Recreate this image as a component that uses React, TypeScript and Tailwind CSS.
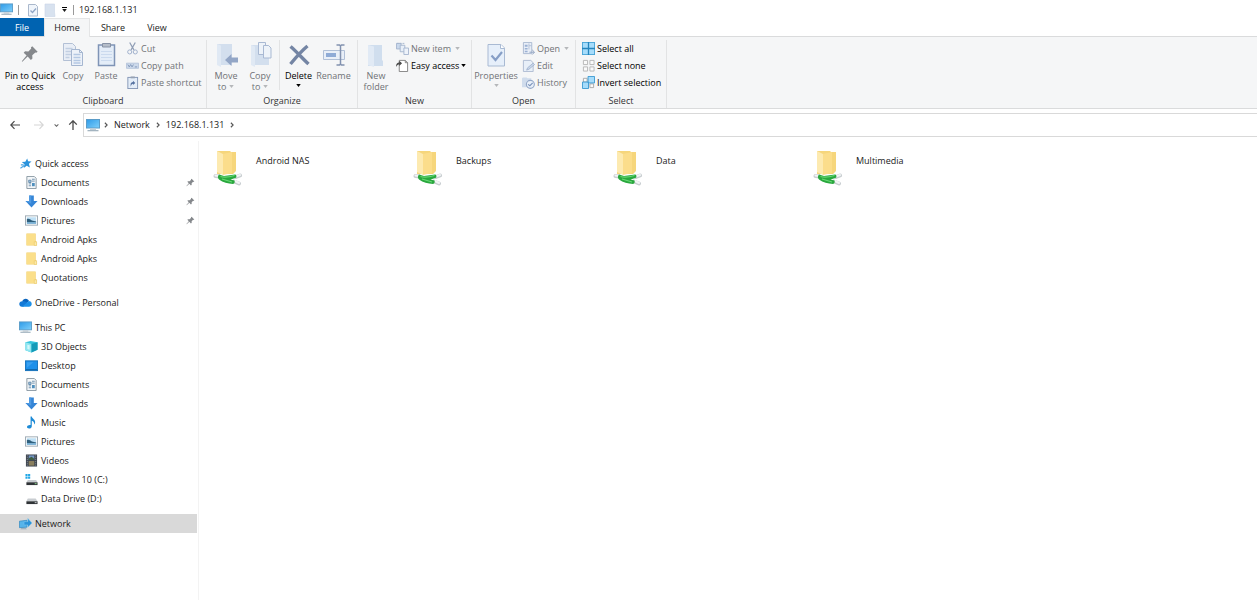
import type { ReactNode } from 'react';
import clsx from 'clsx';

type IconProps = { className?: string };

/* ---------- shared icons ---------- */

const MonitorIcon = ({ className }: IconProps) => (
  <svg viewBox="0 0 14 13" className={className} aria-hidden="true">
    <defs>
      <linearGradient id="screen" x1="0" y1="0" x2="1" y2="1">
        <stop offset="0" stopColor="#2f9be8" />
        <stop offset="1" stopColor="#7fd0fb" />
      </linearGradient>
    </defs>
    <rect x="0.5" y="0.5" width="13" height="8.5" fill="url(#screen)" stroke="#5b9cc8" />
    <path d="M4 9.500h6v1.500H4z" fill="#c4cdd4" />
    <path d="M1.500 11h11v1.300h-11z" fill="#a3b4c0" />
  </svg>
);

const PinIcon = ({ className }: IconProps) => (
  <svg viewBox="0 0 20 20" className={className} fill="currentColor" aria-hidden="true">
    <path d="M12.5 1.5l6 6-1.6 1.2-1-.4-3.4 3.2.2 3.6-1.7 1.5-3.6-3.7L1.5 18.500l-.6-.5 5.300-6.200L3 8.600l1.500-1.600 3.700.3 3.200-3.400-.4-1.200z" />
  </svg>
);

const StarIcon = ({ className }: IconProps) => (
  <svg viewBox="0 0 14 14" className={className} aria-hidden="true">
    <path d="M8.800 1.500l1 3.200 3.700.2-2.800 2.500 1 3.900-3.400-1.900-3.200 2.500.8-4L3 5.400l3.800-.4z" fill="#2a93dc" />
    <path d="M1.500 12l4-2.500M2 8.500h3" stroke="#4ba5e3" strokeWidth="1.300" />
  </svg>
);

const DocumentIcon = ({ className }: IconProps) => (
  <svg viewBox="0 0 14 14" className={className} aria-hidden="true">
    <path d="M2 .5h8l2 2v11H2z" fill="#f4f7f9" stroke="#8796a1" />
    <path d="M4 4.500h2.500v2.500H4zM7.500 3.500h3M7.500 5.500h3M4 8.500h2.500M4 10.500h2.500" stroke="#5d83a3" fill="#9fc3de" strokeWidth="0.900" />
    <path d="M7.500 7.500h3v3.500h-3z" fill="#4f8fbd" />
  </svg>
);

const DownloadIcon = ({ className }: IconProps) => (
  <svg viewBox="0 0 14 14" className={className} aria-hidden="true">
    <path d="M4.500.5h5v6h4L7 13.500.5 6.500h4z" fill="#3585d6" />
    <path d="M4.500.5h2.200v9L2 7 .5 6.500h4z" fill="#4f9ae2" />
  </svg>
);

const PictureIcon = ({ className }: IconProps) => (
  <svg viewBox="0 0 14 14" className={className} aria-hidden="true">
    <rect x="0.500" y="2" width="13" height="10" fill="#fff" stroke="#9aa7b1" />
    <path d="M2 3.500h10v7H2z" fill="#bfe0f5" />
    <path d="M2 5.500c2-1 4 .5 5.500 1.500l4.500 1v1H2z" fill="#2f5f7c" />
    <path d="M2 9h10v1.500H2z" fill="#6aa6cf" />
  </svg>
);

const FolderIcon = ({ className }: IconProps) => (
  <svg viewBox="0 0 14 14" className={className} aria-hidden="true">
    <path d="M1.500.5h10v8l1 1v4h-11z" fill="#f2d06c" />
    <path d="M2 1h9v12H2z" fill="#fbdf8a" />
    <path d="M10 9.500h2.500v4H10z" fill="#fbe9ab" stroke="#e6c258" strokeWidth="0.500" />
  </svg>
);

const CloudIcon = ({ className }: IconProps) => (
  <svg viewBox="0 0 14 14" className={className} aria-hidden="true">
    <path d="M3.500 6C4 3.800 5.500 3 7.200 3c1.800 0 3 1 3.500 2.500L8 8z" fill="#0a64bd" />
    <path d="M3.600 5.600C1.500 5.600.3 7 .3 8.600c0 1.700 1.200 2.900 2.800 2.900h1.500l5-4C7.500 6 5.800 5.400 3.600 5.600z" fill="#1379d6" />
    <path d="M10.500 5.500c1.900 0 3.200 1.300 3.200 3s-1.200 3-3 3H3.100L8.200 7.600z" fill="#1d90e8" />
  </svg>
);

const CubeIcon = ({ className }: IconProps) => (
  <svg viewBox="0 0 14 14" className={className} aria-hidden="true">
    <path d="M.5 2.500L6 1l7.500 1.500v8L7 13.500.5 11z" fill="#35c3dc" />
    <path d="M.5 2.500L7 4.200v9.300L.5 11z" fill="#8fe6f0" />
    <path d="M7 4.200l6.500-1.700v8L7 13.500z" fill="#159ab8" />
    <path d="M2.500 5l2.500.6v4.900L2.500 9.800z" fill="#d3f7fb" />
  </svg>
);

const DesktopIcon = ({ className }: IconProps) => (
  <svg viewBox="0 0 14 14" className={className} aria-hidden="true">
    <rect x="0.500" y="2" width="13" height="10.500" fill="#1e90ea" stroke="#1673bd" />
    <path d="M1 11h12v1H1z" fill="#0f5f9f" />
    <path d="M2 3.500h7l-7 6z" fill="#3aa0f0" />
  </svg>
);

const MusicIcon = ({ className }: IconProps) => (
  <svg viewBox="0 0 14 14" className={className} aria-hidden="true">
    <path d="M6 .5h1.300c.3 2.500 3.900 3 3.600 6.500-.1 1-.6 1.700-1.200 2.200.6-2.400-.7-3.700-2.400-4.200V11c0 1.400-1.300 2.500-2.900 2.500S2 12.800 2.200 11.700c.2-1.300 1.900-2.200 3.800-1.900z" fill="#1c8ad6" />
  </svg>
);

const VideoIcon = ({ className }: IconProps) => (
  <svg viewBox="0 0 14 14" className={className} aria-hidden="true">
    <path d="M1 .5h12v13H1z" fill="#3f4650" />
    <path d="M4 1.500h6v5H4z" fill="#7396c4" />
    <path d="M4 7.500h6v5H4z" fill="#8a7f5e" />
    <path d="M4 4.500l3-1.500 3 2v1.500H4z" fill="#3e5d44" />
    <path d="M2.500 1.500v11.500M11.500 1.500v11.500" stroke="#8d949e" strokeWidth="1" strokeDasharray="1 1" />
  </svg>
);

const WinDriveIcon = ({ className }: IconProps) => (
  <svg viewBox="0 0 14 14" className={className} aria-hidden="true">
    <path d="M.5 1h2.300v2.300H.5zM3.300 1h2.300v2.300H3.300zM.5 3.800h2.300v2.300H.5zM3.300 3.800h2.300v2.300H3.300z" fill="#22a7e6" />
    <path d="M3 7.500h9l1.500 2.500h-12z" fill="#c5cace" />
    <path d="M1.500 10h12v3h-12z" fill="#2f3336" />
    <path d="M10.500 11h2v1h-2z" fill="#8fe08f" />
  </svg>
);

const DriveIcon = ({ className }: IconProps) => (
  <svg viewBox="0 0 14 14" className={className} aria-hidden="true">
    <path d="M3 7h8.500l2 3h-12z" fill="#c9cdd1" />
    <path d="M1.500 10h12v3h-12z" fill="#2f3336" />
    <path d="M10.500 11h2v1h-2z" fill="#d7dbde" />
  </svg>
);

const NetworkIcon = ({ className }: IconProps) => (
  <svg viewBox="0 0 14 14" className={className} aria-hidden="true">
    <path d="M.5 4.500l8-1v7.500l-8 .5z" fill="#56b4ea" stroke="#2b84bd" strokeWidth="0.700" />
    <path d="M5.500 5h4V1.500L14 6.500 9.500 11V8.500h-4z" fill="#2b93d8" stroke="#7cc8f2" strokeWidth="0.500" />
    <path d="M2.500 12h5l1 1.200h-7z" fill="#8aa5b6" />
  </svg>
);

const NetFolderIcon = ({ className }: IconProps) => (
  <svg viewBox="0 0 30 38" className={className} aria-hidden="true">
    <path d="M4 3h13l1 1h5v19l-3 3H4z" fill="#f6d67c" />
    <path d="M4 3l6 3v21l-6-3z" fill="#fdeab0" />
    <path d="M10 6l9-2v21l-9 2z" fill="#fbdd8b" />
    <path d="M2.500 28l4 .5M23 29l4-1.500M21 33.500l5 2" stroke="#c9ced1" strokeWidth="4" strokeLinecap="round" />
    <path d="M2.500 27.500l3 .5M24 28l3-1M22 33l4 2" stroke="#f3f5f6" strokeWidth="2" strokeLinecap="round" />
    <path d="M6 26.500l5 1.500 11-1.500c1.500 0 2 2.500.5 3.500l-5 1.500 4 1c.5 1.500 0 3-1.500 3.500-5-.5-10-1.500-14-4.500-1.500-1.500-1.500-3.500 0-5z" fill="#2aa83e" />
    <path d="M7.500 28.500c4 1.500 9 .5 14-1M9 31l10 3" stroke="#69d876" strokeWidth="1.300" fill="none" />
  </svg>
);

/* ---------- ribbon icons ---------- */

const SheetIcon = ({ className }: IconProps) => (
  <svg viewBox="0 0 12 14" className={className} aria-hidden="true">
    <path d="M1 1h9.500v8l.5 4.500H1z" fill="#d8e2ef" stroke="#c9d5e5" strokeWidth="0.600" />
  </svg>
);

const SheetCheckIcon = ({ className }: IconProps) => (
  <svg viewBox="0 0 12 14" className={className} aria-hidden="true">
    <path d="M1.500 1.500h7l2 2v9.500h-9z" fill="#f0f5fb" stroke="#aab8cc" />
    <path d="M3.500 7.500l2 2 3.500-4" stroke="#8fa5c6" strokeWidth="1.300" fill="none" />
  </svg>
);

const CopyIcon = ({ className }: IconProps) => (
  <svg viewBox="0 0 24 28" className={className} aria-hidden="true">
    <path d="M2.500 3.500h9l3 3v14h-12z" fill="#e9eef6" stroke="#b3c0d5" />
    <path d="M4.500 8.500h7M4.500 11.500h7M4.500 14.500h7M4.500 17.500h4" stroke="#c2cfe2" strokeWidth="1.500" />
    <path d="M10.500 9.500h8l3 3v13h-11z" fill="#edf2f9" stroke="#a5b6d0" />
    <path d="M12.500 14.500h7M12.500 17.500h7M12.500 20.500h7M12.500 23h7" stroke="#b4c8e3" strokeWidth="1.500" />
    <path d="M18.500 9.500v3h3" fill="none" stroke="#a5b6d0" />
  </svg>
);

const PasteIcon = ({ className }: IconProps) => (
  <svg viewBox="0 0 24 28" className={className} aria-hidden="true">
    <rect x="4.500" y="5" width="16" height="20.500" fill="#e4edf8" stroke="#7f94b6" strokeWidth="1.500" />
    <path d="M8.500 3.500h8v3.500h-8z" fill="#b5bdc9" stroke="#8792a5" />
    <path d="M7 11.500h11M7 14.500h11M7 17.500h11M7 20.500h11" stroke="#cbdaee" />
  </svg>
);

const MoveToIcon = ({ className }: IconProps) => (
  <svg viewBox="0 0 24 28" className={className} aria-hidden="true">
    <path d="M3 4h15v21H3z" fill="#d3dfee" />
    <path d="M3 4l4 1.500V27l-4-2z" fill="#e0e9f4" />
    <path d="M11 20l6.500-6v3.500H24v5h-6.500V26z" fill="#93a6c6" />
  </svg>
);

const CopyToIcon = ({ className }: IconProps) => (
  <svg viewBox="0 0 24 28" className={className} aria-hidden="true">
    <path d="M3 5h18v20H3z" fill="#d3dfee" />
    <path d="M3 5l4 1.500V27l-4-2z" fill="#e0e9f4" />
    <path d="M10.500 2.500h7v12h-7z" fill="#eef3f9" stroke="#a9b9d3" />
    <path d="M15.500 5.500h5l2.500 2.500v10h-7.500z" fill="#eef3f9" stroke="#a9b9d3" />
  </svg>
);

const DeleteIcon = ({ className }: IconProps) => (
  <svg viewBox="0 0 24 28" className={className} aria-hidden="true">
    <path d="M3.500 6.500C9 11 16 19 21.500 24M20.500 6C15 10.500 8 18.500 3.500 24" stroke="#7485a4" strokeWidth="3.400" fill="none" />
  </svg>
);

const RenameIcon = ({ className }: IconProps) => (
  <svg viewBox="0 0 24 28" className={className} aria-hidden="true">
    <path d="M1.500 10.500h21v9h-21z" fill="#e9eff8" stroke="#b1c0d7" />
    <path d="M4 13h10v4H4z" fill="#8fabd6" />
    <path d="M14.500 5h3l1 1 1-1h3M18.500 5.500v19M14.500 25h3l1-1 1 1h3" stroke="#8292b0" strokeWidth="1.500" fill="none" />
  </svg>
);

const NewFolderIcon = ({ className }: IconProps) => (
  <svg viewBox="0 0 24 28" className={className} aria-hidden="true">
    <path d="M4 5h14v15l1 1v5H4z" fill="#d0deee" />
    <path d="M4 5l6 1.500V27l-6-2z" fill="#e1eaf5" />
  </svg>
);

const PropertiesIcon = ({ className }: IconProps) => (
  <svg viewBox="0 0 24 28" className={className} aria-hidden="true">
    <path d="M4 4.500h13l3.500 3.500v18H4z" fill="#e6effa" stroke="#a9bad3" />
    <path d="M16.500 4.500v4h4" fill="#fff" stroke="#a9bad3" />
    <path d="M7.500 15.500l4 4.500 6.500-8" stroke="#869ec6" strokeWidth="2.200" fill="none" />
  </svg>
);

const CutIcon = ({ className }: IconProps) => (
  <svg viewBox="0 0 14 14" className={className} fill="none" stroke="#8f9db5" aria-hidden="true">
    <path d="M4 .5l4.500 8M10 .5L5.500 8.500" strokeWidth="1.300" />
    <circle cx="4" cy="10.700" r="2.200" stroke="#9bacc9" />
    <circle cx="10" cy="10.700" r="2.200" stroke="#9bacc9" />
  </svg>
);

const CopyPathIcon = ({ className }: IconProps) => (
  <svg viewBox="0 0 14 14" className={className} aria-hidden="true">
    <path d="M.5 4.500h13v5.500H.5z" fill="#cddaeb" stroke="#b5c4da" />
    <path d="M2 6l1.500 2.500L5 6l1.500 2.500L8 6M9.500 8.500h2.500" stroke="#8196b9" fill="none" />
  </svg>
);

const PasteShortcutIcon = ({ className }: IconProps) => (
  <svg viewBox="0 0 14 14" className={className} aria-hidden="true">
    <rect x="2" y="1.500" width="10.500" height="12" fill="#e4edf8" stroke="#8496b5" />
    <path d="M5 .5h4.500v2H5z" fill="#96a2b3" />
    <path d="M5 11.500V9c0-1.500 1-2.500 2.500-2.500V5L10 7.500 7.500 9.800V8.300C6.500 8.300 6 9 5 11.500z" fill="#5672a0" />
  </svg>
);

const NewItemIcon = ({ className }: IconProps) => (
  <svg viewBox="0 0 14 14" className={className} stroke="#a5b5ce" aria-hidden="true">
    <path d="M.5 1.500h5v6h-5z" fill="#c9d8ec" />
    <path d="M4.500 3.500h5v7h-5z" fill="#e8eff8" />
    <path d="M8.500 6.500h5v7h-5z" fill="#eef3fa" />
    <path d="M1 1.500h9" strokeDasharray="2 1" />
  </svg>
);

const EasyAccessIcon = ({ className }: IconProps) => (
  <svg viewBox="0 0 14 14" className={className} aria-hidden="true">
    <path d="M3.500 1.500h6.500l2.500 2.500v9.500h-9z" fill="#fff" stroke="#808080" />
    <path d="M10 1.500v2.500h2.500" fill="none" stroke="#808080" />
    <path d="M0 8.500C0 5 1.500 3.800 3.500 3.800V2l3 2.700-3 2.800V6C2.300 6 1.200 6.500 0 8.500z" fill="#4a4a4a" />
  </svg>
);

const OpenIcon = ({ className }: IconProps) => (
  <svg viewBox="0 0 14 14" className={className} aria-hidden="true">
    <path d="M1.500.5h9v12h-9z" fill="#e8eef7" stroke="#aab9d1" />
    <path d="M3 3h3v2H3zM3 6.500h3v1.500H3zM3 9.500h3v1.500H3z" fill="#9bb1d3" />
    <path d="M7.500 1.500v6.500M7.500 4h3" stroke="#b3c1d8" />
    <path d="M8 11h5M11 8.500l2.500 2.500L11 13.500" stroke="#8ea0be" fill="none" />
  </svg>
);

const EditIcon = ({ className }: IconProps) => (
  <svg viewBox="0 0 14 14" className={className} aria-hidden="true">
    <path d="M1.500 1.500h8l2.500 2.500v9.500H1.500z" fill="#e8eff8" stroke="#adbbd2" />
    <path d="M5 12l1-2.500 6-5 1.500 1.500-6 5z" fill="#c9d7ea" stroke="#98abc9" strokeWidth="0.800" />
  </svg>
);

const HistoryIcon = ({ className }: IconProps) => (
  <svg viewBox="0 0 14 14" className={className} aria-hidden="true">
    <path d="M0 2.500l1-1h4l1 1h4V12H0z" fill="#d0dcec" />
    <circle cx="9" cy="9" r="4.300" fill="#e9f0f9" stroke="#94a8c8" strokeWidth="1.200" />
    <path d="M6.500 9l2 1.500L11.500 7.500" stroke="#7a92ba" fill="none" strokeWidth="1.200" />
  </svg>
);

const SelectAllIcon = ({ className }: IconProps) => (
  <svg viewBox="0 0 14 14" className={className} aria-hidden="true">
    <rect x="0.500" y="0.500" width="13" height="13" fill="#a6dcfb" stroke="#4aa5d8" />
    <path d="M7 0v14M0 7h14" stroke="#2585bd" strokeWidth="1.400" />
  </svg>
);

const SelectNoneIcon = ({ className }: IconProps) => (
  <svg viewBox="0 0 14 14" className={className} fill="#fafafa" stroke="#b5b5b5" aria-hidden="true">
    <path d="M1.500 1.500h4.500v4.500H1.500zM8.500 1.500H13v4.500H8.500zM1.500 8.500h4.500V13H1.500zM8.500 8.500H13V13H8.500z" />
  </svg>
);

const InvertIcon = ({ className }: IconProps) => (
  <svg viewBox="0 0 14 14" className={className} aria-hidden="true">
    <path d="M1.500 2.500h4v4h-4zM8.500 8.500h4v4h-4z" fill="#fafafa" stroke="#a8a8a8" />
    <path d="M6.500.5h7v7h-7zM.5 6.500h6.500v7H.5z" fill="#a6dcfb" stroke="#3b99d0" />
  </svg>
);

/* ---------- small pieces ---------- */

const Caret = ({ className }: IconProps) => (
  <svg viewBox="0 0 6 4" className={clsx('h-[3px] w-[5px]', className)} fill="currentColor" aria-hidden="true">
    <path d="M0 0h6L3 4z" />
  </svg>
);

const Crumb = () => (
  <svg viewBox="0 0 5 8" className="h-[6px] w-1" fill="none" stroke="#555" strokeWidth="1.500" aria-hidden="true">
    <path d="M1 1l3 3-3 3" />
  </svg>
);

type ActionProps = {
  icon: (p: IconProps) => ReactNode;
  label: string;
  lines?: string[];
  width?: string;
  menu?: boolean;
  enabled?: boolean;
  iconClass?: string;
};

function BigButton({ icon: Icon, label, lines = [label], width, menu, enabled, iconClass = 'h-7 w-6' }: ActionProps) {
  return (
    <button
      type="button"
      aria-label={label}
      disabled={!enabled}
      className={clsx('flex flex-col items-center whitespace-nowrap leading-[11px]', width, enabled ? 'text-black' : 'text-[#707276]')}
    >
      <span className="mb-[2px] flex h-7 items-center">
        <Icon className={iconClass} />
      </span>
      {lines.map((line, i) => (
        <span key={line} className="flex items-center gap-[3px]">
          {line}
          {menu && lines.length > 1 && i === lines.length - 1 && <Caret className="text-[#b5b7ba]" />}
        </span>
      ))}
      {menu && lines.length === 1 && <Caret className={clsx('mt-[3px]', !enabled && 'text-[#b5b7ba]')} />}
    </button>
  );
}

function SmallButton({ icon: Icon, label, menu, enabled }: ActionProps) {
  return (
    <button
      type="button"
      disabled={!enabled}
      className={clsx('flex h-[17px] items-center gap-[2px] whitespace-nowrap', enabled ? 'text-black' : 'text-[#707276]')}
    >
      <Icon className="h-[13px] w-[13px]" />
      {label}
      {menu && <Caret className={clsx(!enabled && 'ml-[2px] text-[#b5b7ba]')} />}
    </button>
  );
}

function Group({ title, width, children }: { title: string; width: string; children: ReactNode }) {
  return (
    <section aria-label={title} className={clsx('flex shrink-0 flex-col border-r border-[#e2e3e4]', width)}>
      <div className="flex flex-1 items-start">{children}</div>
      <div className="pb-px text-center leading-[12px] text-[#333]">{title}</div>
    </section>
  );
}

const Stack = ({ className, children }: { className?: string; children: ReactNode }) => (
  <div className={clsx('flex flex-col items-start', className)}>{children}</div>
);

/* ---------- data ---------- */

const navGroups = [
  {
    title: 'Quick access',
    icon: StarIcon,
    items: [
      { label: 'Documents', icon: DocumentIcon, pinned: true },
      { label: 'Downloads', icon: DownloadIcon, pinned: true },
      { label: 'Pictures', icon: PictureIcon, pinned: true },
      { label: 'Android Apks', icon: FolderIcon },
      { label: 'Android Apks', icon: FolderIcon },
      { label: 'Quotations', icon: FolderIcon },
    ],
  },
  { title: 'OneDrive - Personal', icon: CloudIcon, items: [] },
  {
    title: 'This PC',
    icon: MonitorIcon,
    items: [
      { label: '3D Objects', icon: CubeIcon },
      { label: 'Desktop', icon: DesktopIcon },
      { label: 'Documents', icon: DocumentIcon },
      { label: 'Downloads', icon: DownloadIcon },
      { label: 'Music', icon: MusicIcon },
      { label: 'Pictures', icon: PictureIcon },
      { label: 'Videos', icon: VideoIcon },
      { label: 'Windows 10 (C:)', icon: WinDriveIcon },
      { label: 'Data Drive (D:)', icon: DriveIcon },
    ],
  },
  { title: 'Network', icon: NetworkIcon, items: [], selected: true },
];

const shares = ['Android NAS', 'Backups', 'Data', 'Multimedia'];

export default function App() {
  return (
    <div className="flex min-h-screen flex-col overflow-hidden bg-white font-['Open_Sans','Noto_Sans',sans-serif] text-[9px] text-[#1a1a1a]">
      {/* Title bar */}
      <header className="flex h-[18px] items-center pt-px">
        <MonitorIcon className="h-[13px] w-[13px]" />
        <span className="ml-[5px] h-[10px] w-px bg-[#9a9a9a]" />
        <button type="button" aria-label="Properties" className="ml-2">
          <SheetCheckIcon className="h-[14px] w-3" />
        </button>
        <button type="button" aria-label="New folder" className="ml-[5px]">
          <SheetIcon className="h-[14px] w-3" />
        </button>
        <button type="button" aria-label="Customize Quick Access Toolbar" className="ml-[6px] flex flex-col items-center gap-px">
          <span className="h-px w-[5px] bg-black" />
          <Caret />
        </button>
        <span className="ml-[6px] h-[10px] w-px bg-[#9a9a9a]" />
        <h1 className="ml-[5px]">192.168.1.131</h1>
      </header>

      {/* Ribbon tabs */}
      <div role="tablist" className="flex h-[19px] border-b border-[#dadbdc]">
        <button type="button" role="tab" aria-selected="false" className="w-11 bg-[#0063b1] pt-px text-white">File</button>
        <button type="button" role="tab" aria-selected="true" className="-mb-px w-[46px] border-x border-t border-[#e4e5e6] bg-[#f5f6f7]">Home</button>
        <button type="button" role="tab" aria-selected="false" className="w-[46px] pt-px">Share</button>
        <button type="button" role="tab" aria-selected="false" className="w-[42px] pt-px">View</button>
      </div>

      {/* Ribbon */}
      <div className="flex h-[72px] border-b border-[#dadbdc] bg-[#f5f6f7] pt-[3px]">
        <Group title="Clipboard" width="w-[207px]">
          <BigButton icon={PinIcon} label="Pin to Quick access" lines={['Pin to Quick', 'access']} width="w-[60px]" enabled iconClass="h-[18px] w-[18px] text-[#85888c]" />
          <BigButton icon={CopyIcon} label="Copy" width="w-[26px]" />
          <BigButton icon={PasteIcon} label="Paste" width="w-10" />
          <Stack>
            <SmallButton icon={CutIcon} label="Cut" />
            <SmallButton icon={CopyPathIcon} label="Copy path" />
            <SmallButton icon={PasteShortcutIcon} label="Paste shortcut" />
          </Stack>
        </Group>
        <Group title="Organize" width="w-[151px]">
          <BigButton icon={MoveToIcon} label="Move to" lines={['Move', 'to']} width="ml-[2px] w-[34px]" menu />
          <BigButton icon={CopyToIcon} label="Copy to" lines={['Copy', 'to']} width="w-[34px]" menu />
          <span className="mx-[2px] h-[50px] w-px bg-[#e2e3e4]" />
          <BigButton icon={DeleteIcon} label="Delete" width="w-[33px]" menu enabled />
          <BigButton icon={RenameIcon} label="Rename" width="w-[37px]" />
        </Group>
        <Group title="New" width="w-[114px]">
          <BigButton icon={NewFolderIcon} label="New folder" lines={['New', 'folder']} width="w-9" />
          <Stack className="pl-[2px]">
            <SmallButton icon={NewItemIcon} label="New item" menu />
            <SmallButton icon={EasyAccessIcon} label="Easy access" menu enabled />
          </Stack>
        </Group>
        <Group title="Open" width="w-[104px]">
          <BigButton icon={PropertiesIcon} label="Properties" width="w-12" menu />
          <Stack className="pl-[2px]">
            <SmallButton icon={OpenIcon} label="Open" menu />
            <SmallButton icon={EditIcon} label="Edit" />
            <SmallButton icon={HistoryIcon} label="History" />
          </Stack>
        </Group>
        <Group title="Select" width="w-[91px]">
          <Stack className="pl-[6px]">
            <SmallButton icon={SelectAllIcon} label="Select all" enabled />
            <SmallButton icon={SelectNoneIcon} label="Select none" enabled />
            <SmallButton icon={InvertIcon} label="Invert selection" enabled />
          </Stack>
        </Group>
      </div>

      {/* Address bar */}
      <div className="flex h-8 items-center py-1">
        <button type="button" aria-label="Back" className="ml-[10px]">
          <svg viewBox="0 0 10 10" className="h-[10px] w-[10px]" fill="none" stroke="#4a4a4a" strokeWidth="1.200"><path d="M10 5H.8M4.500 1.200L.8 5l3.700 3.800" /></svg>
        </button>
        <button type="button" aria-label="Forward" disabled className="ml-[14px]">
          <svg viewBox="0 0 10 10" className="h-[10px] w-[10px]" fill="none" stroke="#d6d6d6" strokeWidth="1.200"><path d="M0 5h9.200M5.500 1.200L9.200 5 5.500 8.800" /></svg>
        </button>
        <button type="button" aria-label="Recent locations" className="ml-[10px]">
          <svg viewBox="0 0 6 4" className="h-[3px] w-[5px]" fill="none" stroke="#666" strokeWidth="1.400"><path d="M.5.5L3 3 5.500.5" /></svg>
        </button>
        <button type="button" aria-label="Up" className="ml-[9px]">
          <svg viewBox="0 0 10 10" className="h-[10px] w-[10px]" fill="none" stroke="#4a4a4a" strokeWidth="1.300"><path d="M5 10V.8M1.200 4.600L5 .8l3.800 3.800" /></svg>
        </button>
        <nav aria-label="Address" className="ml-[5px] flex h-6 flex-1 items-center border-y border-l border-[#d9d9d9] pl-[2px]">
          <MonitorIcon className="mr-1 h-[13px] w-[14px]" />
          <Crumb />
          <a href="#network" className="mx-[6px]">Network</a>
          <Crumb />
          <a href="#host" className="mx-[6px]">192.168.1.131</a>
          <Crumb />
        </nav>
      </div>

      <div className="flex flex-1">
        {/* Navigation pane */}
        <nav aria-label="Folders" className="flex w-[199px] shrink-0 flex-col gap-[6px] border-r border-[#f3f3f3] pr-px pt-[13px]">
          {navGroups.map((group) => (
            <ul key={group.title}>
              <li>
                <a href="#" className={clsx('flex h-[19px] items-center gap-[3px] pl-[19px]', group.selected && 'bg-[#d9d9d9]')}>
                  <group.icon className="h-[13px] w-[13px]" />
                  {group.title}
                </a>
              </li>
              {group.items.map((item, i) => (
                <li key={i}>
                  <a href="#" className="flex h-[19px] items-center gap-[3px] pl-[25px] pr-[2px]">
                    <item.icon className="h-[13px] w-[13px]" />
                    {item.label}
                    {'pinned' in item && <PinIcon className="ml-auto h-[9px] w-[9px] text-[#85888c]" />}
                  </a>
                </li>
              ))}
            </ul>
          ))}
        </nav>

        {/* Shares */}
        <main className="flex-1 pl-[14px] pt-[7px]">
          <ul className="flex flex-wrap">
            {shares.map((name) => (
              <li key={name} className="w-[200px]">
                <a href="#" className="flex gap-[13px]">
                  <NetFolderIcon className="h-[38px] w-[30px]" />
                  <span className="pt-[6px] leading-[14px]">{name}</span>
                </a>
              </li>
            ))}
          </ul>
        </main>
      </div>
    </div>
  );
}
